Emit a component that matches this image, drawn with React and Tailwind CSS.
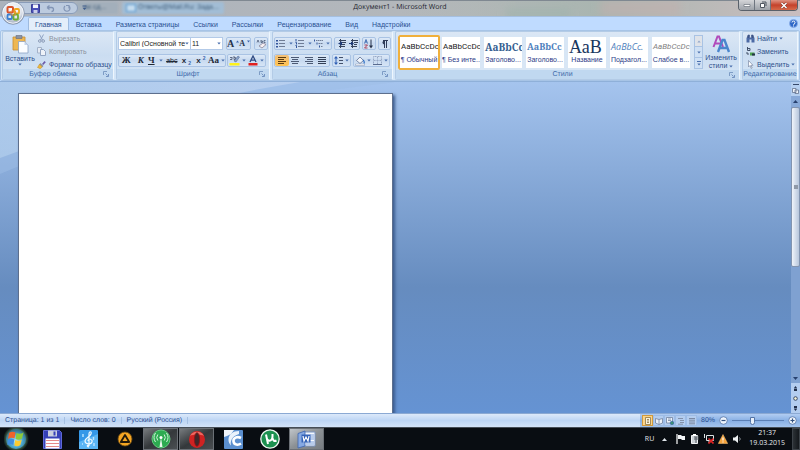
import { useState } from "react";
import clsx from "clsx";

const TABS = [
  "Главная",
  "Вставка",
  "Разметка страницы",
  "Ссылки",
  "Рассылки",
  "Рецензирование",
  "Вид",
  "Надстройки",
];

const STYLES = [
  { name: "¶ Обычный", sample: "AaBbCcDc", look: "font-[Roboto,sans-serif] text-[8px] text-[#222]" },
  { name: "¶ Без инте...", sample: "AaBbCcDc", look: "font-[Roboto,sans-serif] text-[8px] text-[#222]" },
  { name: "Заголово...", sample: "AaBbCc", look: "font-['Noto_Serif','DejaVu_Serif',serif] text-[10px] font-bold text-[#365f91]" },
  { name: "Заголово...", sample: "AaBbCc", look: "font-['Noto_Serif','DejaVu_Serif',serif] text-[9px] font-bold text-[#4f81bd]" },
  { name: "Название", sample: "АаВ", look: "font-['Liberation_Serif',serif] text-[18px] text-[#17365d]" },
  { name: "Подзагол...", sample: "AaBbCc.", look: "font-['Open_Sans',sans-serif] text-[9px] italic text-[#4f81bd]" },
  { name: "Слабое в...", sample: "AaBbCcDc", look: "font-[Roboto,sans-serif] text-[8px] italic text-[#808080]" },
];

function Icon({ w = 10, h = 10, className, children }) {
  return (
    <svg width={w} height={h} viewBox={`0 0 ${w} ${h}`} fill="none" className={clsx("shrink-0", className)}>
      {children}
    </svg>
  );
}

function Caret({ className }) {
  return (
    <Icon w={4} h={3} className={className}>
      <path d="M0.3 0.5h3.4L2 2.6z" fill="#4a6fae" />
    </Icon>
  );
}

function Group({ title, className, launcher = true, children }) {
  return (
    <section
      className={clsx(
        "flex flex-col overflow-hidden rounded-xs border border-[#b3cbe6] border-r-[#eef6fd] bg-linear-to-b from-[#dbe7f5] via-[#cbddf1] to-[#d5e5f6]",
        className
      )}
    >
      <div className="flex flex-1">{children}</div>
      <div className="flex h-[10px] items-center bg-[#c0d8f0] text-[#3e6aaa]">
        <h2 className="flex-1 text-center whitespace-nowrap">{title}</h2>
        {launcher && (
          <button aria-label={`${title}: параметры`} className="pr-1">
            <Icon w={6} h={6}>
              <path d="M0.5 4V0.5H4" stroke="#7d9cc5" />
              <path d="M2.5 2.5l2 2M5.5 3v2.5H3" stroke="#5f82b5" strokeWidth="0.8" />
            </Icon>
          </button>
        )}
      </div>
    </section>
  );
}

function Cluster({ className, children }) {
  return (
    <div className={clsx("flex h-[13px] items-center rounded-xs border border-[#a9c3e4] bg-linear-to-b from-[#dde9f7] via-[#c8daf0] to-[#d6e5f6]", className)}>
      {children}
    </div>
  );
}

function Tool({ label, active, caret, className, children }) {
  return (
    <button
      aria-label={label}
      title={label}
      className={clsx(
        "flex h-full flex-1 items-center justify-center gap-0.5",
        active && "rounded-xs bg-linear-to-b from-[#f3c078] to-[#ffc24d]",
        className
      )}
    >
      {children}
      {caret && <Caret />}
    </button>
  );
}

function Combo({ label, value, className }) {
  return (
    <label className={clsx("relative flex h-[13px] items-center border border-[#b3cae8] bg-white", className)}>
      <span className="sr-only">{label}</span>
      <select className="h-full w-full appearance-none pl-px text-[7px] text-[#222] outline-none" defaultValue={value}>
        <option>{value}</option>
      </select>
      <Caret className="pointer-events-none absolute right-px" />
    </label>
  );
}

function Lines({ widths, x = 0, color = "#333f55" }) {
  return widths.map((w, i) => <rect key={i} x={x} y={1 + i * 2} width={w} height="1" fill={color} />);
}

/* Title bar */

function OfficeOrb() {
  return (
    <button aria-label="Кнопка Office" className="absolute top-px left-px z-10">
      <Icon w={24} h={24}>
        <defs>
          <radialGradient id="orb" cx="50%" cy="35%" r="65%">
            <stop offset="0" stopColor="#ffffff" />
            <stop offset="0.6" stopColor="#dfe4ec" />
            <stop offset="1" stopColor="#8f9cb2" />
          </radialGradient>
        </defs>
        <circle cx="12" cy="12" r="11.3" fill="url(#orb)" stroke="#8492aa" strokeWidth="0.8" />
        <circle cx="12" cy="12" r="10.2" stroke="#f5f8fc" />
        <rect x="6.5" y="6" width="5.500" height="5.500" rx="1" stroke="#d9532c" strokeWidth="2" />
        <rect x="13.500" y="8" width="4.500" height="4.500" rx="1" stroke="#f0a81e" strokeWidth="1.800" />
        <rect x="6.500" y="13.500" width="4.500" height="4.500" rx="1" stroke="#3b7fd0" strokeWidth="1.800" />
        <rect x="12.500" y="13.500" width="4.500" height="5" rx="1" stroke="#6fae35" strokeWidth="1.800" />
        <path d="M10 10h4.500v4H10z" stroke="#e8882c" strokeWidth="0.800" />
      </Icon>
    </button>
  );
}

function TitleBar() {
  return (
    <header className="relative flex h-[16px] shrink-0 bg-linear-to-r from-[#abb2bc] via-[#b3b7bb] to-[#c3bfbf]">
      <div className="absolute inset-0 overflow-hidden" aria-hidden="true">
        <div className="absolute inset-y-0 right-0 left-1/2 bg-linear-to-r from-transparent via-[#a9b5b0] to-[#c9bdbf]" />
        <div className="absolute top-0.5 left-[76px] flex gap-1 text-[7px] text-[#44607c] blur-[1px]">
          <span className="h-3 w-[42px] rounded-xs bg-[#a3afbb] pl-2 leading-3">ак сд...</span>
          <span className="h-3 w-[102px] rounded-xs bg-[#a2bdd5] pl-4 leading-3">Ответы@Mail.Ru: Зада...</span>
        </div>
        <div className="absolute top-1 left-[126px] h-2 w-2.5 border border-[#5c9bd0] bg-[#c6dcef] blur-[1px]" />
        <div className="absolute top-0 right-[120px] h-4 w-20 bg-[#c2b0ae] opacity-60 blur-xs" />
        <div className="absolute top-2 right-[230px] h-3 w-16 bg-[#9fb3ad] opacity-60 blur-xs" />
        <div className="absolute inset-x-0 top-0 h-px bg-[#7f8891]" />
      </div>

      <div className="relative mt-0.5 ml-3 flex h-[12px] w-[66px] items-center gap-1.5 rounded-r-full border border-[#8a9cb8] bg-[#bccbdf] pl-[18px]">
        <button aria-label="Сохранить">
          <Icon w={9} h={9}>
            <path d="M0.5 0.5h8v8h-8z" fill="#4a50b8" stroke="#3b3f96" />
            <path d="M2 0.5h5v3.5H2z" fill="#f2f4fb" />
            <path d="M2.5 6h4v3h-4z" fill="#c9cdea" />
          </Icon>
        </button>
        <button aria-label="Отменить">
          <Icon w={9} h={9}>
            <path d="M2 3.5h3.5a2 2 0 0 1 0 4M1 3.5l2.5-2M1 3.5l2.5 2" stroke="#8295b5" strokeWidth="1.3" />
          </Icon>
        </button>
        <button aria-label="Повторить" className="ml-0.5">
          <Icon w={8} h={9}>
            <path d="M2 2a3 3 0 1 0 4 0M6 4.500V1.500h-3" stroke="#8295b5" strokeWidth="1.200" />
          </Icon>
        </button>
      </div>
      <button aria-label="Настройка панели" className="relative mb-px ml-1">
        <Icon w={5} h={6}>
          <path d="M0.500 1h4" stroke="#3f5d8c" />
          <path d="M0.500 2.800h4L2.500 5z" fill="#3f5d8c" />
        </Icon>
      </button>
      <h1 className="absolute inset-x-0 top-0 text-center font-['Open_Sans','Noto_Sans',sans-serif] text-[7px] leading-4 text-[#1c232d]">Документ1 - Microsoft Word</h1>

      <div className="relative mr-0.5 ml-auto flex h-[11px] overflow-hidden rounded-b-sm border border-t-0 border-[#59606a]">
        <button aria-label="Свернуть" className="flex w-4 items-center justify-center border-r border-[#6e757f] bg-linear-to-b from-[#d4d5d8] to-[#9da2a9]">
          <Icon w={8} h={6}>
            <path d="M1 2.500h6v2H1z" fill="#fff" stroke="#5b626c" strokeWidth="0.600" />
          </Icon>
        </button>
        <button aria-label="Восстановить" className="flex w-4 items-center justify-center border-r border-[#6e757f] bg-linear-to-b from-[#d4d5d8] to-[#9da2a9]">
          <Icon w={8} h={8}>
            <path d="M3 1h4v4" stroke="#4f5660" />
            <path d="M1.500 2.500h4v4h-4z" fill="#fff" stroke="#4f5660" />
          </Icon>
        </button>
        <button aria-label="Закрыть" className="flex w-[26px] items-center justify-center bg-linear-to-b from-[#dd9383] via-[#c4412a] to-[#d5694a]">
          <Icon w={8} h={7}>
            <path d="M1.500 1l5 5M6.500 1l-5 5" stroke="#6b2a20" strokeWidth="2.400" />
            <path d="M1.500 1l5 5M6.500 1l-5 5" stroke="#fff" strokeWidth="1.500" />
          </Icon>
        </button>
      </div>
    </header>
  );
}

/* Ribbon */

function ClipboardGroup() {
  return (
    <Group title="Буфер обмена" className="w-[112px]">
      <button className="flex w-[34px] flex-col items-center pt-0.5 text-[#2d4f8b]">
        <Icon w={18} h={20}>
          <path d="M2 3h12v13H2z" fill="#eeb752" stroke="#c68d34" strokeWidth="0.800" />
          <path d="M5 1.500h6v3H5z" fill="#8b93a3" stroke="#646c7c" strokeWidth="0.600" />
          <path d="M7.500 7.500h6l3.500 3.500v8H7.500z" fill="#fbfdff" stroke="#8ba1c4" strokeWidth="0.800" />
          <path d="M13.500 7.500V11H17z" fill="#c3d4ec" />
        </Icon>
        <span className="leading-[9px]">Вставить</span>
        <Caret />
      </button>
      <div className="flex flex-col gap-1 pt-0.5">
        <button className="flex h-[9px] items-center gap-[3px] text-[#8d949f]">
          <Icon w={9} h={9}>
            <path d="M2.500 0.500l3 5.500M6.500 0.500l-3 5.500" stroke="#8fa3c4" />
            <circle cx="2.800" cy="7" r="1.300" stroke="#8b9bb7" />
            <circle cx="6.200" cy="7" r="1.300" stroke="#8b9bb7" />
          </Icon>
          Вырезать
        </button>
        <button className="flex h-[9px] items-center gap-[3px] text-[#8d949f]">
          <Icon w={9} h={9}>
            <path d="M0.500 0.500h4v5.500h-4z" fill="#e5ebf4" stroke="#a3b2c9" />
            <path d="M3.500 2.500h3l2 2v4h-5z" fill="#eef2f8" stroke="#93a5c2" />
          </Icon>
          Копировать
        </button>
        <button className="flex h-[9px] items-center gap-[3px] whitespace-nowrap text-[#2d4f8b]">
          <Icon w={9} h={9}>
            <path d="M5 4l2.500-3 1.300 1.200L6.200 5z" fill="#6b5aa8" />
            <path d="M3.500 3l3 3-1.300 1.300-3-3z" fill="#8a93a8" />
            <path d="M2.500 4.200l2.800 2.800-2 1.700L0.500 7.500z" fill="#eebb3d" stroke="#bb852b" strokeWidth="0.500" />
          </Icon>
          Формат по образцу
        </button>
      </div>
    </Group>
  );
}

function FontGroup() {
  return (
    <Group title="Шрифт" className="w-[154px]">
      <div className="flex flex-col gap-1 pt-[5px] pl-px">
        <div className="flex gap-[3px]">
          <div className="flex">
            <Combo label="Шрифт" value="Calibri (Основной те" className="w-[73px]" />
            <Combo label="Размер" value="11" className="w-8 border-l-0" />
          </div>
          <Cluster className="w-[25px] font-['Liberation_Serif',serif] font-bold text-[#26324a]">
            <Tool label="Увеличить размер">
              <span className="text-[10px] leading-none">A</span>
              <Icon w={3} h={7}><path d="M0 2.500L1.500 0.500 3 2.500z" fill="#3b66ae" /></Icon>
            </Tool>
            <Tool label="Уменьшить размер">
              <span className="text-[8px] leading-none">A</span>
              <Icon w={3} h={7}><path d="M0 0.500h3L1.500 2.500z" fill="#3b66ae" /></Icon>
            </Tool>
          </Cluster>
          <Cluster className="w-[14px]">
            <Tool label="Очистить формат">
              <Icon w={11} h={10}>
                <path d="M1 3.500l1-2.500 1 2.500M5 1v2.500h1.500V2H5M9.500 1.500H8v2h1.500" stroke="#4d5b77" strokeWidth="0.800" />
                <path d="M3 7l4-3 3 1.500L6 9z" fill="#f6eff2" stroke="#8b879b" strokeWidth="0.800" />
              </Icon>
            </Tool>
          </Cluster>
        </div>
        <div className="flex gap-px text-[#1f2937]">
          <Cluster className="w-[108px] text-[9px]">
            <Tool label="Полужирный"><b className="font-['Liberation_Serif',serif]">Ж</b></Tool>
            <Tool label="Курсив"><b className="font-['Liberation_Serif',serif] italic">К</b></Tool>
            <Tool label="Подчеркнутый" caret className="gap-1 pr-0.5"><b className="font-['Liberation_Serif',serif] underline">Ч</b></Tool>
            <Tool label="Зачеркнутый"><s className="text-[7px]">abc</s></Tool>
            <Tool label="Подстрочный" className="gap-0"><b className="text-[8px]">x</b><b className="self-end text-[5px] text-[#3b66ae]">2</b></Tool>
            <Tool label="Надстрочный" className="gap-0"><b className="text-[8px]">x</b><b className="self-start pt-px text-[5px] text-[#3b66ae]">2</b></Tool>
            <Tool label="Регистр" caret><b className="font-['Liberation_Serif',serif]">Aa</b></Tool>
          </Cluster>
          <Cluster className="w-[39px]">
            <Tool label="Цвет выделения" caret>
              <Icon w={11} h={11}>
                <path d="M1 4.500h2V2M1 2.500h2M5 1v3.500h1.500V2.500H5" stroke="#56617a" strokeWidth="0.900" />
                <path d="M5 6l4-5 1.500 1L7 7z" fill="#8aa5ce" stroke="#4c5f85" strokeWidth="0.500" />
                <path d="M0.500 8h10v2.500h-10z" fill="#fdf11c" />
              </Icon>
            </Tool>
            <Tool label="Цвет текста" caret>
              <Icon w={10} h={11}>
                <path d="M2 7L5 1l3 6M3 5.200h4" stroke="#2f4a82" strokeWidth="1.300" />
                <path d="M0.500 8h9v2.500h-9z" fill="#e02020" />
              </Icon>
            </Tool>
          </Cluster>
        </div>
      </div>
    </Group>
  );
}

function ParagraphGroup() {
  return (
    <Group title="Абзац" className="w-[121px]">
      <div className="flex flex-col gap-1 pt-[5px] pl-px">
        <div className="flex gap-0.5">
          <Cluster className="w-[58px]">
            <Tool label="Маркеры" caret className="gap-1">
              <Icon w={9} h={9}>
                <path d="M0 1h2v1.500H0zM0 4h2v1.500H0zM0 7h2v1.500H0z" fill="#33569c" />
                <path d="M3 1.500h6M3 4.500h6M3 7.500h6" stroke="#6f7d96" />
              </Icon>
            </Tool>
            <Tool label="Нумерация" caret className="gap-1">
              <Icon w={9} h={9}>
                <path d="M1 0v2.500M0.500 3.500H1.500v2M0.500 6.500H1.500v2.500" stroke="#33569c" />
                <path d="M3 1.500h6M3 4.500h6M3 7.500h6" stroke="#6f7d96" />
              </Icon>
            </Tool>
            <Tool label="Многоуровневый список" caret>
              <Icon w={10} h={9}>
                <path d="M0.500 0.500v2M3 3.500v2M5.500 6.500v2" stroke="#33569c" />
                <path d="M2 1.500h7M4.500 4.500H9M7 7.500h2" stroke="#6f7d96" strokeDasharray="1.500 0.500" />
              </Icon>
            </Tool>
          </Cluster>
          <Cluster className="w-[26px]">
            <Tool label="Уменьшить отступ">
              <Icon w={9} h={9}>
                <path d="M2 1.500h7M5 3.500h4M5 5.500h3M2 7.500h6M3.500 0v9" stroke="#36435c" />
                <path d="M5 2.500v4L1 4.500z" fill="#1f3b78" />
              </Icon>
            </Tool>
            <Tool label="Увеличить отступ">
              <Icon w={9} h={9}>
                <path d="M2 1.500h7M5 3.500h4M5 5.500h3M2 7.500h6M3.500 0v9" stroke="#36435c" />
                <path d="M0 4h2V2.500l3 2-3 2V5H0z" fill="#1f3b78" />
              </Icon>
            </Tool>
          </Cluster>
          <Cluster className="w-[14px]">
            <Tool label="Сортировка">
              <Icon w={10} h={10}>
                <path d="M0.500 4.500l1.500-4 1.500 4M1 3h2" stroke="#3b66ae" strokeWidth="0.900" />
                <path d="M0.500 6h3L0.500 9h3" stroke="#a8324d" strokeWidth="0.900" />
                <path d="M7 0.500v7" stroke="#27324a" />
                <path d="M5 6.500h4L7 9.500z" fill="#27324a" />
              </Icon>
            </Tool>
          </Cluster>
          <Cluster className="w-[13px]">
            <Tool label="Знаки форматирования">
              <Icon w={7} h={8}>
                <path d="M3.500 8V0.500M5.500 8V0.500M2 0.500h5" stroke="#2f3c58" />
                <path d="M3.500 0.500a2 2 0 0 0 0 4z" fill="#2f3c58" />
              </Icon>
            </Tool>
          </Cluster>
        </div>
        <div className="flex gap-0.5">
          <Cluster className="w-[56px]">
            <Tool label="По левому краю" active><Icon w={8} h={9}><Lines widths={[8, 6, 8, 6]} color="#5d3c10" /></Icon></Tool>
            <Tool label="По центру"><Icon w={8} h={9}><Lines widths={[8, 8, 8, 8]} color="#4c5a74" /><path d="M0 3h1v1H0zM7 3h1v1H7zM0 7h1v1H0zM7 7h1v1H7z" fill="#cbdcf0" /></Icon></Tool>
            <Tool label="По правому краю"><Icon w={8} h={9}><Lines widths={[8, 8, 8, 8]} color="#4c5a74" /><path d="M0 3h2v1H0zM0 7h2v1H0z" fill="#cbdcf0" /></Icon></Tool>
            <Tool label="По ширине"><Icon w={8} h={9}><Lines widths={[8, 8, 8, 8]} /></Icon></Tool>
          </Cluster>
          <Cluster className="w-[19px]">
            <Tool label="Интервал" caret>
              <Icon w={9} h={9}>
                <path d="M2 1v7" stroke="#2f5fb4" />
                <path d="M0 2.500h4L2 0zM0 6.500h4L2 9z" fill="#2f5fb4" />
                <path d="M5 1.500h4M5 4.500h4M5 7.500h4" stroke="#44516b" />
              </Icon>
            </Tool>
          </Cluster>
          <Cluster className="w-[37px]">
            <Tool label="Заливка" caret>
              <Icon w={10} h={10}>
                <path d="M1.500 4.500L5 1l3.500 3.500L5 7.500z" fill="#f3f6fb" stroke="#5f7092" strokeWidth="0.800" />
                <path d="M8 4c1.500 1 1.500 2 1 3.500" stroke="#2f6fc4" strokeWidth="1.200" />
                <path d="M0.500 8h9v1.500h-9z" fill="#fff" stroke="#8091b0" strokeWidth="0.500" />
              </Icon>
            </Tool>
            <Tool label="Границы" caret>
              <Icon w={9} h={9}>
                <path d="M0.500 0.500h8v8h-8zM4.500 1v7M1 4.500h7" stroke="#98a9c5" strokeDasharray="1 0.500" />
                <path d="M0 8.500h9" stroke="#5a6c8f" />
              </Icon>
            </Tool>
          </Cluster>
        </div>
      </div>
    </Group>
  );
}

function StylesGroup() {
  const [picked, setPicked] = useState(0);

  return (
    <Group title="Стили" className="flex-1">
      <div className="mt-[3px] ml-0.5 flex h-[35px] flex-1 overflow-hidden rounded-xs bg-[#d8e6f5]">
        {STYLES.map((s, i) => (
          <button
            key={i}
            onClick={() => setPicked(i)}
            className={clsx(
              "flex h-full w-[42px] shrink-0 flex-col overflow-hidden border-2 bg-white bg-clip-padding pt-0.5 whitespace-nowrap",
              picked === i ? "rounded-xs border-[#f0b03c]" : "border-[#d8e6f5]"
            )}
          >
            <span className={clsx("h-4 w-full overflow-hidden pl-px text-left leading-4", s.look)}>{s.sample}</span>
            <span className="w-full text-center leading-[10px] text-[#2b3a86]">{s.name}</span>
          </button>
        ))}
      </div>
      <div className="mt-[3px] flex h-[34px] w-[9px] flex-col divide-y divide-[#a9c3e4] border border-[#a9c3e4] bg-[#cfe0f4]">
        <button aria-label="Вверх" className="flex flex-1 items-center justify-center bg-[#dfe3e9]"><Caret className="rotate-180 opacity-50" /></button>
        <button aria-label="Вниз" className="flex flex-1 items-center justify-center"><Caret /></button>
        <button aria-label="Все стили" className="flex flex-1 flex-col items-center justify-center gap-px"><span className="h-px w-1 bg-[#4a6fae]" /><Caret /></button>
      </div>
      <button className="flex w-[36px] flex-col items-center pt-0.5 leading-[8px] text-[#2d4f8b]">
        <Icon w={20} h={20}>
          <path d="M2.500 13L6.500 2.500h1.500l4 10.500M4.500 9.500h5.500" stroke="#b14bbb" strokeWidth="2" />
          <path d="M7 18l4.500-12h2l4.500 12M9 14h7" stroke="#4a86cd" strokeWidth="2.400" />
        </Icon>
        <span>Изменить</span>
        <span className="flex items-center gap-0.5">стили <Caret /></span>
      </button>
    </Group>
  );
}

function EditingGroup() {
  return (
    <Group title="Редактирование" className="w-[56px]" launcher={false}>
      <div className="flex flex-col gap-1 pt-0.5 pl-[3px] text-[#2d4f8b]">
        <button className="flex h-[9px] items-center gap-0.5">
          <Icon w={9} h={9}>
            <path d="M1 4l1-3h1.500v3M8 4L7 1H5.500v3" fill="#3c5488" stroke="#3c5488" strokeWidth="0.600" />
            <path d="M0.500 4h3v4.500h-3zM5.500 4h3v4.500h-3zM3.500 3.500h2v2h-2z" fill="#4c6aa5" />
          </Icon>
          Найти <Caret />
        </button>
        <button className="flex h-[9px] items-center gap-0.5">
          <Icon w={9} h={9}>
            <path d="M1.500 0v3.500H4v-2H1.500M1 5v2h2" stroke="#36435c" strokeWidth="0.900" />
            <path d="M4 5.500h4.500v3H4z" fill="#4aa14c" />
            <path d="M6 6.500h3v2H6z" fill="#27324a" />
          </Icon>
          Заменить
        </button>
        <button className="flex h-[9px] items-center gap-0.5">
          <Icon w={9} h={9}>
            <path d="M2.500 0.500v6.500l1.500-1.500 1.200 3 1-.500-1.200-2.700H7z" fill="#fff" stroke="#7c8aa5" strokeWidth="0.700" />
          </Icon>
          Выделить <Caret />
        </button>
      </div>
    </Group>
  );
}

function Ribbon() {
  const [tab, setTab] = useState(TABS[0]);

  return (
    <div className="shrink-0 border-b border-[#8fb0d9] bg-[#bfdbff]">
      <nav className="flex h-[14px] items-end border-t border-[#a5bfdf] pl-[28px]">
        {TABS.map((t) => (
          <button
            key={t}
            onClick={() => setTab(t)}
            className={clsx(
              "h-[13px] border border-b-0 px-1.5 text-[#2a4f91]",
              t === tab ? "rounded-t-xs border-[#9ebbe0] bg-[#e4eefa]" : "border-transparent"
            )}
          >
            {t}
          </button>
        ))}
        <button aria-label="Справка" className="mr-0.5 mb-0.5 ml-auto">
          <Icon w={9} h={9}>
            <circle cx="4.500" cy="4.500" r="4" fill="#2e67c8" stroke="#8fb2e8" strokeWidth="0.800" />
            <path d="M3 3.500a1.500 1.500 0 1 1 1.800 1.500v0.800M4.500 6.500v1" stroke="#fff" />
          </Icon>
        </button>
      </nav>
      <div className="flex h-[51px] gap-0.5 rounded-xs border border-[#a7c4e6] bg-[#d3e5f7] px-px">
        <ClipboardGroup />
        <FontGroup />
        <ParagraphGroup />
        <StylesGroup />
        <EditingGroup />
      </div>
    </div>
  );
}

/* Document area */

function Workspace() {
  return (
    <main className="relative flex min-h-0 flex-1 overflow-hidden bg-linear-to-b from-[#a5c4ee] via-[#668cbf] via-62% to-[#6593d3]">
      <svg className="absolute inset-0 h-full w-full" viewBox="0 0 800 331" preserveAspectRatio="none" aria-hidden="true">
        <defs>
          <linearGradient id="glow" x1="0" y1="0" x2="1" y2="0">
            <stop offset="0" stopColor="#b7d2ee" />
            <stop offset="1" stopColor="#c6d8f3" />
          </linearGradient>
        </defs>
        <path d="M0 0h396L150 30 0 92z" fill="#9dbde6" opacity="0.500" />
        <path d="M0 0h300Q120 30 0 76z" fill="url(#glow)" opacity="0.600" />
      </svg>
      <div className="relative flex-1 overflow-hidden">
        <article
          contentEditable
          suppressContentEditableWarning
          aria-label="Документ"
          className="mt-[11px] ml-[18px] h-full w-[375px] border border-[#5d6f8d] bg-white shadow-[2px_2px_3px_#3b5a8c] outline-none"
        />
      </div>
      <div className="relative flex w-[9px] flex-col bg-[#7fa1d1]">
        <button aria-label="Линейка" className="flex h-[14px] flex-col items-center gap-0.5 bg-[#b5cff0] pt-0.5">
          <span className="h-px w-1.5 bg-[#35486b]" />
          <Icon w={7} h={7}>
            <path d="M0.500 1.500h3.500v4H0.500zM3 3h3.500v3.500H3z" fill="#eef2f8" stroke="#64748f" strokeWidth="0.800" />
          </Icon>
        </button>
        <button aria-label="Прокрутить вверх" className="flex h-[11px] items-center justify-center bg-[#88a9d8]">
          <Icon w={5} h={3}><path d="M0 3h5L2.500 0z" fill="#27406e" /></Icon>
        </button>
        <div className="flex h-[160px] items-center justify-center rounded-xs border border-[#8294b0] bg-linear-to-r from-[#f0f4fa] to-[#b7c6dc]">
          <span className="h-1 w-1 bg-[#8f99a8]" />
        </div>
        <div className="flex-1" />
        <button aria-label="Прокрутить вниз" className="flex h-[10px] items-center justify-center">
          <Icon w={5} h={3}><path d="M0 0h5L2.500 3z" fill="#27406e" /></Icon>
        </button>
        <div className="flex h-[30px] flex-col items-center justify-around bg-[#b3cdf0]">
          <button aria-label="Предыдущая страница"><Icon w={5} h={5}><path d="M1 2l1.500-2L4 2zM1 2.500h3V5H1z" fill="#22304c" /></Icon></button>
          <button aria-label="Объект перехода"><Icon w={5} h={5}><circle cx="2.500" cy="2.500" r="1.800" fill="#f6f2d8" stroke="#3b4a66" /></Icon></button>
          <button aria-label="Следующая страница"><Icon w={5} h={5}><path d="M1 3l1.500 2L4 3zM1 0h3v2.500H1z" fill="#22304c" /></Icon></button>
        </div>
      </div>
    </main>
  );
}

/* Status bar */

const VIEWS = ["Разметка страницы", "Режим чтения", "Веб-документ", "Структура", "Черновик"];

function ViewGlyph({ index }) {
  return (
    <Icon w={8} h={8}>
      {index === 0 && <path d="M1.500 0.500h5v7h-5zM3 2.500h2M3 4h2M3 5.500h2" fill="#fbf3dd" stroke="#8d7440" strokeWidth="0.800" />}
      {index === 1 && <path d="M0.500 1.500L4 2.500l3.500-1v4.500L4 7.500 0.500 6zM4 2.500v5" fill="#eef3fa" stroke="#70819e" strokeWidth="0.800" />}
      {index === 2 && (
        <>
          <path d="M0.500 0.500h6v5.500h-6zM2 2h3M2 3.500h3" fill="#eef3fa" stroke="#70819e" strokeWidth="0.800" />
          <circle cx="6" cy="6" r="1.800" fill="#3c8f76" stroke="#2e5fa8" strokeWidth="0.600" />
        </>
      )}
      {index === 3 && <path d="M1 1.500h5M3 3.500h4M3 5.500h4M1 7.200h5" stroke="#8391a9" />}
      {index === 4 && <path d="M1 1.500h6M1 3.200h6M1 5h6M1 6.800h6" stroke="#7c8aa3" />}
    </Icon>
  );
}

function StatusBar() {
  return (
    <footer className="flex h-[14px] shrink-0 items-center border-t border-[#8ba9d3] bg-linear-to-b from-[#dce9fa] via-[#bdd5f4] to-[#d3e3f8] text-[#2a4f91]">
      <span className="border-r border-[#a5c0e3] px-[5px]">Страница: 1 из 1</span>
      <span className="border-r border-[#a5c0e3] px-[5px]">Число слов: 0</span>
      <span className="border-r border-[#a5c0e3] px-[5px]">Русский (Россия)</span>
      <div className="ml-auto flex h-full items-center bg-linear-to-b from-[#b2cdf2] via-[#88afe4] to-[#a4c4ee] pr-[3px] pl-0.5">
        <div className="flex">
          {VIEWS.map((v, i) => (
            <button
              key={v}
              aria-label={v}
              className={clsx(
                "flex h-[11px] w-[11px] items-center justify-center border",
                i === 0 ? "border-[#d29a3c] bg-[#fbd48a]" : "border-[#9dbce6] bg-[#b4cdef]"
              )}
            >
              <ViewGlyph index={i} />
            </button>
          ))}
        </div>
        <span className="w-[22px] text-center">80%</span>
        <button aria-label="Уменьшить">
          <Icon w={9} h={9}>
            <circle cx="4.500" cy="4.500" r="3.800" fill="#eef4fc" stroke="#5474a6" strokeWidth="0.800" />
            <path d="M2.500 4.500h4" stroke="#33517f" strokeWidth="1.200" />
          </Icon>
        </button>
        <input
          type="range"
          aria-label="Масштаб"
          defaultValue="38"
          className="mx-1 h-2 w-[52px] appearance-none bg-[linear-gradient(#5b7fb5,#5b7fb5)] bg-[length:100%_1px] bg-center bg-no-repeat [&::-webkit-slider-thumb]:h-2 [&::-webkit-slider-thumb]:w-[5px] [&::-webkit-slider-thumb]:appearance-none [&::-webkit-slider-thumb]:rounded-b-full [&::-webkit-slider-thumb]:border [&::-webkit-slider-thumb]:border-[#5474a6] [&::-webkit-slider-thumb]:bg-[#e9f1fb]"
        />
        <button aria-label="Увеличить">
          <Icon w={9} h={9}>
            <circle cx="4.500" cy="4.500" r="3.800" fill="#eef4fc" stroke="#5474a6" strokeWidth="0.800" />
            <path d="M2.500 4.500h4M4.500 2.500v4" stroke="#33517f" strokeWidth="1.200" />
          </Icon>
        </button>
      </div>
    </footer>
  );
}

/* Windows taskbar */

function TaskButton({ label, running, focused, className, children }) {
  return (
    <button
      aria-label={label}
      title={label}
      className={clsx(
        "flex h-full w-[35px] shrink-0 items-center justify-center border",
        running ? "border-[#6b7076] bg-linear-to-br" : "border-transparent",
        running && (focused ? "from-[#c0c5ca] via-[#8b9094] to-[#777c81]" : "from-[#777b7e] via-[#34383b] to-[#4a4e52]"),
        className
      )}
    >
      {children}
    </button>
  );
}

function Taskbar() {
  return (
    <footer className="flex h-[23px] shrink-0 items-stretch border-t border-[#454d56] bg-[#090d12] text-[#e8ebee]">
      <button aria-label="Пуск" className="ml-1 flex items-center">
        <Icon w={26} h={22}>
          <defs>
            <radialGradient id="start" cx="50%" cy="60%" r="55%">
              <stop offset="0" stopColor="#b8ecff" />
              <stop offset="0.600" stopColor="#4aa6cf" />
              <stop offset="1" stopColor="#35708a" />
            </radialGradient>
            <radialGradient id="halo">
              <stop offset="0.600" stopColor="#7fc08b" />
              <stop offset="1" stopColor="#5fae7b" stopOpacity="0" />
            </radialGradient>
          </defs>
          <circle cx="12" cy="11" r="13" fill="url(#halo)" opacity="0.800" />
          <circle cx="12" cy="11" r="10" fill="url(#start)" />
          <path d="M5 5c2-1.500 4.500-1.500 6.500-0.500l-1 6c-2-1-4-1-6.500 0.500z" fill="#f0632b" />
          <path d="M12.500 5c2 1 4.500 1 7-0.500l-1.500 6c-2 1.500-4.500 1.500-6.500 0.500z" fill="#8cca3a" />
          <path d="M4 12c2-1.500 4.500-1.500 6.300-0.500l-1 5.500c-2-1-4-1-6 0z" fill="#3f8de0" />
          <path d="M11.300 12c2 1 4.500 1 6.500-0.500l-1.500 5.500c-2 1.500-4 1.500-6 0.500z" fill="#fccb31" />
        </Icon>
      </button>
      <div className="ml-[5px] flex gap-px">
        <TaskButton label="Total Commander">
          <Icon w={19} h={19}>
            <path d="M0.500 0.500h16l2 2v16h-18z" fill="#3540b8" stroke="#5e68d6" />
            <path d="M5 0.500h9v6H5z" fill="#c9cede" />
            <path d="M10.500 1.500h2v4h-2z" fill="#3540b8" />
            <path d="M2.500 8.500h14v10h-14z" fill="#fff" />
            <path d="M3 10.500h13M3 13.500h13M3 16.500h13" stroke="#e58a8a" />
          </Icon>
        </TaskButton>
        <TaskButton label="Музыка">
          <Icon w={19} h={19}>
            <rect width="19" height="19" rx="1" fill="#3598e8" />
            <path d="M0 12L19 4v15H0z" fill="#5bb5f4" />
            <path d="M10 17c-2 0-2-2-1-2s1 1 1 1V4c0-3 3-3 2 0s-6 4-6 7 6 4 7 1-4-4-4-1" stroke="#f0faff" strokeWidth="1.200" />
            <path d="M4 4v3M14.500 7v3M15 13v3M3 14h1" stroke="#bde4ff" strokeWidth="1.400" />
          </Icon>
        </TaskButton>
        <TaskButton label="AIMP">
          <Icon w={16} h={16}>
            <circle cx="8" cy="8" r="7" fill="#f5a623" stroke="#6e4b12" strokeWidth="0.800" />
            <path d="M8 4l4.200 7H3.800z" stroke="#221a0b" strokeWidth="1.800" strokeLinejoin="round" />
          </Icon>
        </TaskButton>
        <TaskButton label="Беспроводная сеть" running>
          <Icon w={20} h={20}>
            <circle cx="10" cy="10" r="9" fill="#2cab50" stroke="#63cd80" />
            <path d="M6.800 5.500a5 5 0 0 0 0 6M13.200 5.500a5 5 0 0 1 0 6M4.500 4a8 8 0 0 0 0 9M15.500 4a8 8 0 0 1 0 9" stroke="#d3f3dc" />
            <path d="M10 8.500L8.500 18h3z" fill="#fff" opacity="0.900" />
            <circle cx="10" cy="8.500" r="1.500" fill="#fff" />
          </Icon>
        </TaskButton>
        <TaskButton label="Opera" running>
          <Icon w={18} h={19}>
            <ellipse cx="9" cy="9.500" rx="8" ry="8.500" fill="#cf2222" />
            <path d="M2 6a8 8 0 0 1 14 0c-3-2-11-2-14 0z" fill="#ee6a62" />
            <ellipse cx="9" cy="9.500" rx="2.600" ry="6.800" fill="#41272a" stroke="#8e1414" strokeWidth="0.800" />
          </Icon>
        </TaskButton>
        <TaskButton label="Диспетчер загрузки" className="ml-px">
          <Icon w={19} h={19}>
            <rect width="19" height="19" rx="1" fill="#5b8fcf" />
            <path d="M0 0h10L7 4 3 6 0 7z" fill="#f1f6fc" />
            <path d="M15 1C9 1 5 4 4.500 9c-.300 3 1 5 2.500 6.500C6 11 8 6 15 4z" fill="#eaf2fb" />
            <path d="M17 8c-4-2-8 0-7.500 3.500S14 15.500 17 13.500" stroke="#fff" strokeWidth="2.600" />
          </Icon>
        </TaskButton>
        <TaskButton label="µTorrent">
          <Icon w={20} h={20}>
            <circle cx="10" cy="10" r="9.200" fill="#1d9150" stroke="#eef6f0" strokeWidth="1.300" />
            <path d="M6 5.500l2 9.500M6.500 8c.500 5 5.500 5 6-.500V5M12.500 9c.500 3 2 3.500 4 2.500" stroke="#fff" strokeWidth="2" />
          </Icon>
        </TaskButton>
        <TaskButton label="Microsoft Word" running focused className="ml-px">
          <Icon w={19} h={19}>
            <path d="M7 2h11v14H7z" fill="#f5f8fd" stroke="#7c97c5" />
            <path d="M13 5h4M13 7h4M13 9h4M9 12h8M9 14h8" stroke="#7b9fda" />
            <path d="M1 3.500L8 1v15l-7 2z" fill="#86a9e3" stroke="#3c65ae" strokeWidth="0.800" />
            <path d="M4.500 4.500h9v8h-9z" fill="#3563b7" />
            <path d="M6 6l1 5 2-4 2 4 1-5" stroke="#fff" strokeWidth="1.200" />
          </Icon>
        </TaskButton>
      </div>

      <div className="ml-auto flex items-center font-['Open_Sans','Noto_Sans',sans-serif] text-[7px]">
        <span className="mr-2">RU</span>
        <button aria-label="Скрытые значки" className="mr-[9px]"><Icon w={5} h={3}><path d="M0 3h5L2.500 0z" fill="#dfe5ea" /></Icon></button>
        <div className="flex items-center gap-1">
          <Icon w={10} h={10}><path d="M1 0v10" stroke="#fff" strokeWidth="1.200" /><path d="M2 1h3l1 1h3v4H6L5 5H2z" fill="#f2f4f6" /></Icon>
          <Icon w={10} h={10}><path d="M1.500 1.500h6v8h-6z" fill="#cdd2d6" stroke="#f2f4f6" /><path d="M4 3h5M4 5h5M6 3v6" stroke="#50575e" /><path d="M3 0h3v2H3z" fill="#fff" /></Icon>
          <Icon w={10} h={10}>
            <path d="M2.500 1.500h7v5h-7zM0.500 0v4M5 7v2" stroke="#dde1e4" />
            <path d="M4.500 4.500l5 5M9.500 4.500l-5 5" stroke="#e02424" strokeWidth="1.700" />
          </Icon>
          <Icon w={10} h={10}><path d="M5 0.500l4.700 9H0.300z" fill="#f5a33b" stroke="#fbc579" strokeWidth="0.500" /><path d="M5 3.500v3M5 7.500v1" stroke="#fff" strokeWidth="1.200" /></Icon>
          <Icon w={10} h={10}><path d="M1 3.500h2L6 1v8L3 6.500H1z" fill="#eef1f3" /><path d="M7.500 3.500c.800 1 .800 2 0 3" stroke="#9aa1a8" /></Icon>
        </div>
        <time className="mx-[7px] text-center leading-[10px]">
          21:37
          <br />
          19.03.2015
        </time>
        <button aria-label="Показать рабочий стол" className="h-full w-2 border border-[#3c4248] bg-linear-to-r from-[#2c3136] to-[#14181c]" />
      </div>
    </footer>
  );
}

export default function App() {
  return (
    <div className="relative flex h-screen flex-col overflow-hidden font-['Liberation_Sans',Arial,sans-serif] text-[7px] leading-none [text-rendering:geometricPrecision]">
      <TitleBar />
      <OfficeOrb />
      <Ribbon />
      <Workspace />
      <StatusBar />
      <Taskbar />
    </div>
  );
}
